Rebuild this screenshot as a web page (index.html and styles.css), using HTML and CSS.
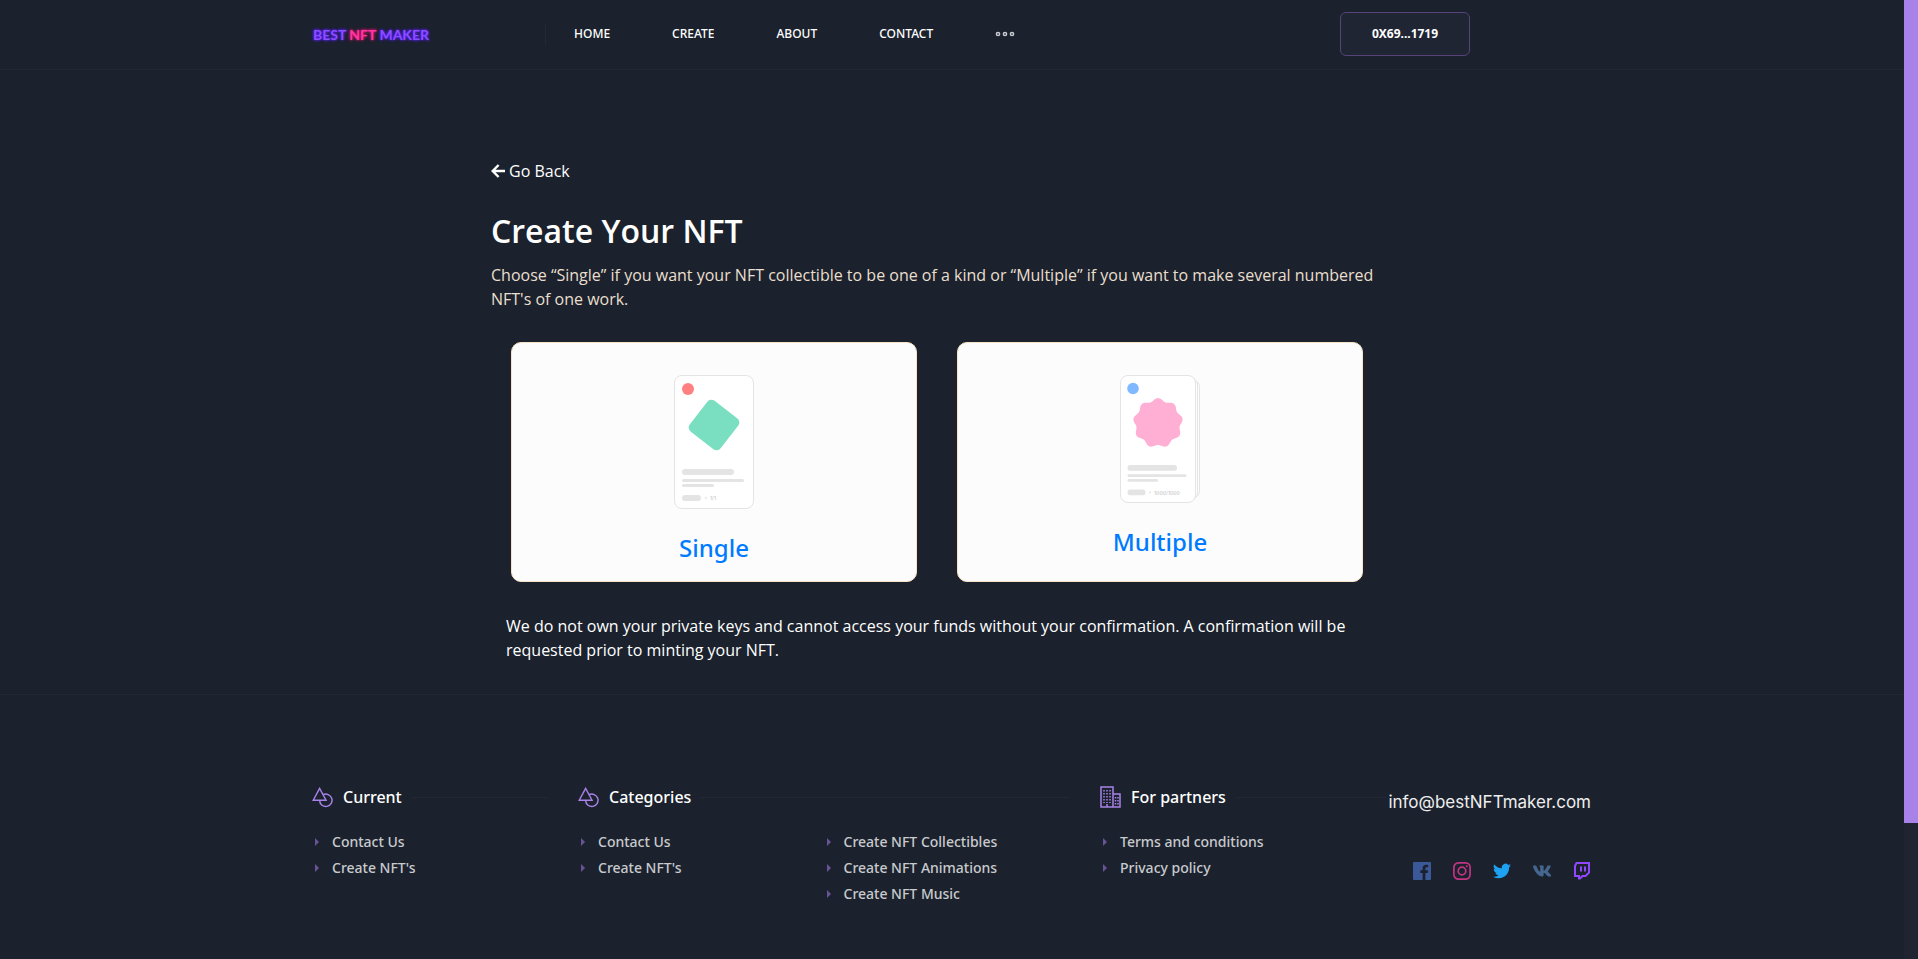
FILE: index.html
```html
<!DOCTYPE html>
<html lang="en">
<head>
<meta charset="utf-8">
<title>Best NFT Maker - Create</title>
<link rel="stylesheet" href="styles.css">
</head>
<body>
<svg class="defs" aria-hidden="true">
  <symbol id="shapes" viewBox="0 0 22 22"><path d="M8 1.500 1.300 13.800h13.400zM8 14.300a6.500 6.500 0 1 0 3.600-6.200" fill="none" stroke="currentColor" stroke-width="1.500"/></symbol>
</svg>
<div class="page">
  <header class="header">
    <div class="container header-row">
      <a class="logo" href="#">BEST <span class="logo-accent">NFT</span> MAKER</a>
      <nav class="nav">
        <a href="#">HOME</a>
        <a href="#">CREATE</a>
        <a href="#">ABOUT</a>
        <a href="#">CONTACT</a>
        <button class="more" aria-label="More">
          <svg width="20" height="6" viewBox="0 0 20 6" fill="none" stroke="#c8cad0" stroke-width="1.500"><circle cx="3" cy="3" r="1.600"/><circle cx="10" cy="3" r="1.600"/><circle cx="17" cy="3" r="1.600"/></svg>
        </button>
      </nav>
      <button class="wallet">0X69...1719</button>
    </div>
  </header>

  <main class="main">
    <a class="back" href="#"><svg width="14" height="14" viewBox="0 0 14 14" fill="none" stroke="currentColor" stroke-width="2.400"><path d="M7.600 1 1.700 7l5.900 6M2 7h12"/></svg>Go Back</a>
    <h1 class="title">Create Your NFT</h1>
    <p class="lead">Choose “Single” if you want your NFT collectible to be one of a kind or “Multiple” if you want to make several numbered NFT's of one work.</p>
    <div class="cards">
      <a class="card" href="#">
        <svg width="80" height="134" viewBox="0 0 80 134">
          <rect x=".5" y=".5" width="79" height="133" rx="7.500" fill="#fff" stroke="#e4e4e4"/>
          <circle cx="14" cy="14" r="6" fill="#ff8080"/>
          <rect x="20.500" y="30.500" width="39" height="39" rx="5" transform="rotate(38 40 50)" fill="#7adfc1"/>
          <g fill="#e4e4e4"><rect x="8" y="94" width="52" height="6" rx="3"/><rect x="8" y="104" width="62" height="3" rx="1.500"/><rect x="8" y="109" width="32" height="3" rx="1.500"/><rect x="8" y="120" width="19" height="6" rx="3"/><circle cx="32" cy="123" r="1"/></g>
          <text x="36" y="125" class="edition">1/1</text>
        </svg>
        <span class="card-label">Single</span>
      </a>
      <a class="card" href="#">
        <svg width="80" height="128" viewBox="0 0 80 128">
          <g fill="#fff" stroke="#e4e4e4"><rect x="10" y="5" width="69.500" height="118" rx="7"/><rect x="8" y="3" width="69.500" height="122" rx="7"/><rect x=".5" y=".5" width="75" height="127" rx="7.500"/></g>
          <circle cx="13" cy="13.500" r="5.800" fill="#80b9ff"/>
          <path id="seal" fill="#ffaed4" d=""/>
          <g fill="#e4e4e4"><rect x="7.500" y="90" width="49.500" height="5.800" rx="2.900"/><rect x="7.500" y="99.300" width="59" height="2.800" rx="1.400"/><rect x="7.500" y="104" width="30.500" height="2.800" rx="1.400"/><rect x="7.500" y="114.500" width="18" height="5.800" rx="2.900"/><circle cx="30" cy="117.500" r="1"/></g>
          <text x="34" y="119.500" class="edition">1000/1000</text>
        </svg>
        <span class="card-label">Multiple</span>
      </a>
    </div>
    <p class="note">We do not own your private keys and cannot access your funds without your confirmation. A confirmation will be requested prior to minting your NFT.</p>
  </main>

  <footer class="footer">
    <div class="container footer-grid">
      <section>
        <h2 class="foot-title"><svg width="21" height="21"><use href="#shapes"/></svg>Current</h2>
        <ul class="links"><li><a href="#">Contact Us</a></li><li><a href="#">Create NFT's</a></li></ul>
      </section>
      <section>
        <h2 class="foot-title"><svg width="21" height="21"><use href="#shapes"/></svg>Categories</h2>
        <div class="split">
          <ul class="links"><li><a href="#">Contact Us</a></li><li><a href="#">Create NFT's</a></li></ul>
          <ul class="links"><li><a href="#">Create NFT Collectibles</a></li><li><a href="#">Create NFT Animations</a></li><li><a href="#">Create NFT Music</a></li></ul>
        </div>
      </section>
      <section>
        <h2 class="foot-title"><svg width="21" height="22" viewBox="0 0 21 22" fill="none" stroke="#a882e8"><path d="M1 1h12v20H1zM13 8h7v13h-7z" stroke-width="1.500"/><path d="M4 4v13M7 4v13M10 4v13M15.500 11v8M18 11v8" stroke-width="1.500" stroke-dasharray="1.500 1.500"/><path d="M7 18v3" stroke-width="1.500"/></svg>For partners</h2>
        <ul class="links"><li><a href="#">Terms and conditions</a></li><li><a href="#">Privacy policy</a></li></ul>
      </section>
      <section class="contact">
        <a class="email" href="#">info@bestNFTmaker.com</a>
        <div class="social">
          <a href="#" aria-label="Facebook"><svg width="18" height="18" viewBox="0 0 18 18"><path fill="#3b5998" d="M1 0h16a1 1 0 0 1 1 1v16a1 1 0 0 1-1 1h-4.600v-7h2.300l.4-2.700h-2.700V6.600c0-.8.300-1.300 1.400-1.300h1.400V2.900c-.3 0-1.100-.1-2.100-.1-2.100 0-3.500 1.300-3.500 3.600v1.900H7.300V11h2.300v7H1a1 1 0 0 1-1-1V1a1 1 0 0 1 1-1z"/></svg></a>
          <a href="#" aria-label="Instagram"><svg width="18" height="18" viewBox="0 0 18 18" fill="none" stroke="#c13584" stroke-width="1.700"><rect x=".9" y=".9" width="16.200" height="16.200" rx="4.500"/><circle cx="9" cy="9" r="3.800"/><circle cx="13.800" cy="4.200" r="1" fill="#c13584" stroke="none"/></svg></a>
          <a href="#" aria-label="Twitter"><svg width="18" height="18" viewBox="0 0 24 24"><path fill="#1da1f2" d="M24 4.600a10 10 0 0 1-2.800.8 5 5 0 0 0 2.100-2.700 10 10 0 0 1-3.100 1.200 4.900 4.900 0 0 0-8.400 4.500A14 14 0 0 1 1.700 3.200a4.900 4.900 0 0 0 1.500 6.500 5 5 0 0 1-2.200-.6v.1a4.900 4.900 0 0 0 3.900 4.800 5 5 0 0 1-2.200.1 4.900 4.900 0 0 0 4.600 3.400A10 10 0 0 1 0 19.500a14 14 0 0 0 7.500 2.200c9.100 0 14.300-7.700 14-14.600A10 10 0 0 0 24 4.600z"/></svg></a>
          <a href="#" aria-label="VK"><svg width="18" height="18" viewBox="0 0 18 18"><path fill="#45668e" d="M17.600 4.200c.1-.4 0-.7-.6-.7h-2c-.5 0-.7.300-.8.600 0 0-1 2.400-2.400 4-.5.500-.7.600-.9.600-.1 0-.3-.1-.3-.6V4.200c0-.5-.1-.7-.6-.7H6.900c-.3 0-.5.200-.5.400 0 .5.700.6.800 2v2.900c0 .6-.1.800-.4.800-.7 0-2.300-2.500-3.300-5.400-.2-.5-.4-.7-.9-.7H.6c-.5 0-.6.300-.6.600 0 .5.600 3.300 3.100 6.700 1.600 2.400 4 3.600 6.100 3.600 1.300 0 1.400-.3 1.400-.8v-1.800c0-.5.100-.7.500-.7.300 0 .8.200 2 1.300 1.300 1.300 1.500 2 2.300 2h2c.5 0 .8-.3.700-.9-.2-.5-.8-1.300-1.700-2.200-.4-.6-1.100-1.200-1.300-1.500-.3-.3-.2-.5 0-.8 0 0 2.200-3.300 2.500-4.500z"/></svg></a>
          <a href="#" aria-label="Twitch"><svg width="18" height="18" viewBox="0 0 18 18"><path fill="none" stroke="#9147ff" stroke-width="2" d="M3.500 1H16v9.500l-3.500 3.500H9.500L7 16.500H6V14H2V4z"/><path stroke="#9147ff" stroke-width="2" d="M8 4.500v5M12 4.500v5"/></svg></a>
        </div>
      </section>
    </div>
  </footer>
</div>
<div class="scroll-track"><div class="scroll-thumb"></div></div>
<script src="seal.js"></script>
</body>
</html>
```

FILE: styles.css
```css
* { box-sizing: border-box; }
body { margin: 0; display: flex; min-height: 100vh; background: #1b222d; color: #fff; font: 500 16px/24px "Open Sans", "Noto Sans", sans-serif; }
a { color: inherit; text-decoration: none; }
button { background: none; border: 0; padding: 0; color: inherit; font: inherit; cursor: pointer; }
h1, h2, p, ul { margin: 0; padding: 0; }
svg { flex: none; }
.defs { position: absolute; width: 0; height: 0; }
.page { flex: 1; min-width: 0; }
.scroll-track { width: 14px; background: #1f2430; }
.scroll-thumb { height: 823px; background: #a882e8; }
.container { max-width: 1280px; margin: 0 auto; }

.header { border-bottom: 1px solid #232834; }
.header-row { display: flex; align-items: center; height: 69px; padding: 0 122px 2px 0; }
.logo { width: 233px; padding: 2px 0 0 1px; font: 700 14px/16px Lato, sans-serif; color: #8a4dff; text-shadow: 0 0 3px #5a1dff, 0 0 3px #5a1dff; white-space: nowrap; }
.logo-accent { color: #ff37a5; text-shadow: 0 0 3px #e0106f, 0 0 3px #e0106f; }
.nav { display: flex; align-items: center; gap: 62px; height: 22px; padding-left: 28px; border-left: 1px solid #232834; font-family: "Noto Sans", sans-serif; font-size: 12px; font-weight: 500; }
.more { display: flex; }
.wallet { width: 130px; height: 44px; margin-left: auto; border: 1px solid #56437a; border-radius: 6px; background: #202534; font-family: "Noto Sans", sans-serif; font-size: 12px; font-weight: 700; }

.main { max-width: 922px; margin: 0 auto; padding: 89px 30px 32px 0; }
.back { display: flex; align-items: center; gap: 4px; }
.title { margin-top: 28px; font-size: 32px; line-height: 40px; font-weight: 600; }
.lead { margin-top: 12px; color: #eadfce; }
.cards { display: grid; grid-template-columns: 1fr 1fr; gap: 40px; padding: 0 20px; margin-top: 31px; }
.card { display: flex; flex-direction: column; align-items: center; gap: 20px; height: 240px; padding-top: 32px; border: 1px solid #f9e3c6; border-radius: 10px; background: #fcfcfc; color: #007bff; }
.card-label { font-family: "Noto Sans", sans-serif; font-size: 24px; line-height: 38px; }
.edition { font: 600 5px Inter, sans-serif; fill: #cfcfcf; }
.note { margin-top: 32px; padding-left: 15px; }

.footer { border-top: 1px solid #232834; padding: 90px 0 48px; }
.footer-grid { display: grid; grid-template-columns: 235px 491px 287px 1fr; column-gap: 31px; }
.foot-title { display: flex; align-items: center; gap: 10px; font-family: "Noto Sans", sans-serif; font-size: 16px; line-height: 24px; font-weight: 500; white-space: nowrap; }
.foot-title svg { color: #a882e8; }
.foot-title::after { content: ""; flex: 1; height: 1px; background: #232834; }
.links { margin-top: 20px; list-style: none; font-family: "Noto Sans", sans-serif; font-size: 14px; line-height: 26px; color: #c9cacd; }
.links li { display: flex; align-items: center; gap: 13px; padding-left: 3px; }
.links li::before { content: ""; border-left: 4px solid #6a5297; border-top: 4px solid transparent; border-bottom: 4px solid transparent; }
.split { display: grid; grid-template-columns: 1fr 1fr; }
.contact { margin-left: -31px; padding: 5px 1px 0 0; display: flex; flex-direction: column; align-items: flex-end; }
.email { font: 400 17px/24px Inter, sans-serif; color: #eee; }
.social { display: flex; gap: 22px; margin-top: 48px; }
.social a { display: flex; }
```

FILE: seal.js
```js
// Wavy nine-lobed seal for the "Multiple" artwork.
var points = [];
for (var i = 0; i < 180; i++) {
  var a = i * Math.PI / 90;
  var r = 23.400 + 1.500 * Math.cos(9 * a);
  points.push((38 + r * Math.sin(a)).toFixed(2) + " " + (48 - r * Math.cos(a)).toFixed(2));
}
document.getElementById("seal").setAttribute("d", "M" + points.join("L") + "Z");
```
